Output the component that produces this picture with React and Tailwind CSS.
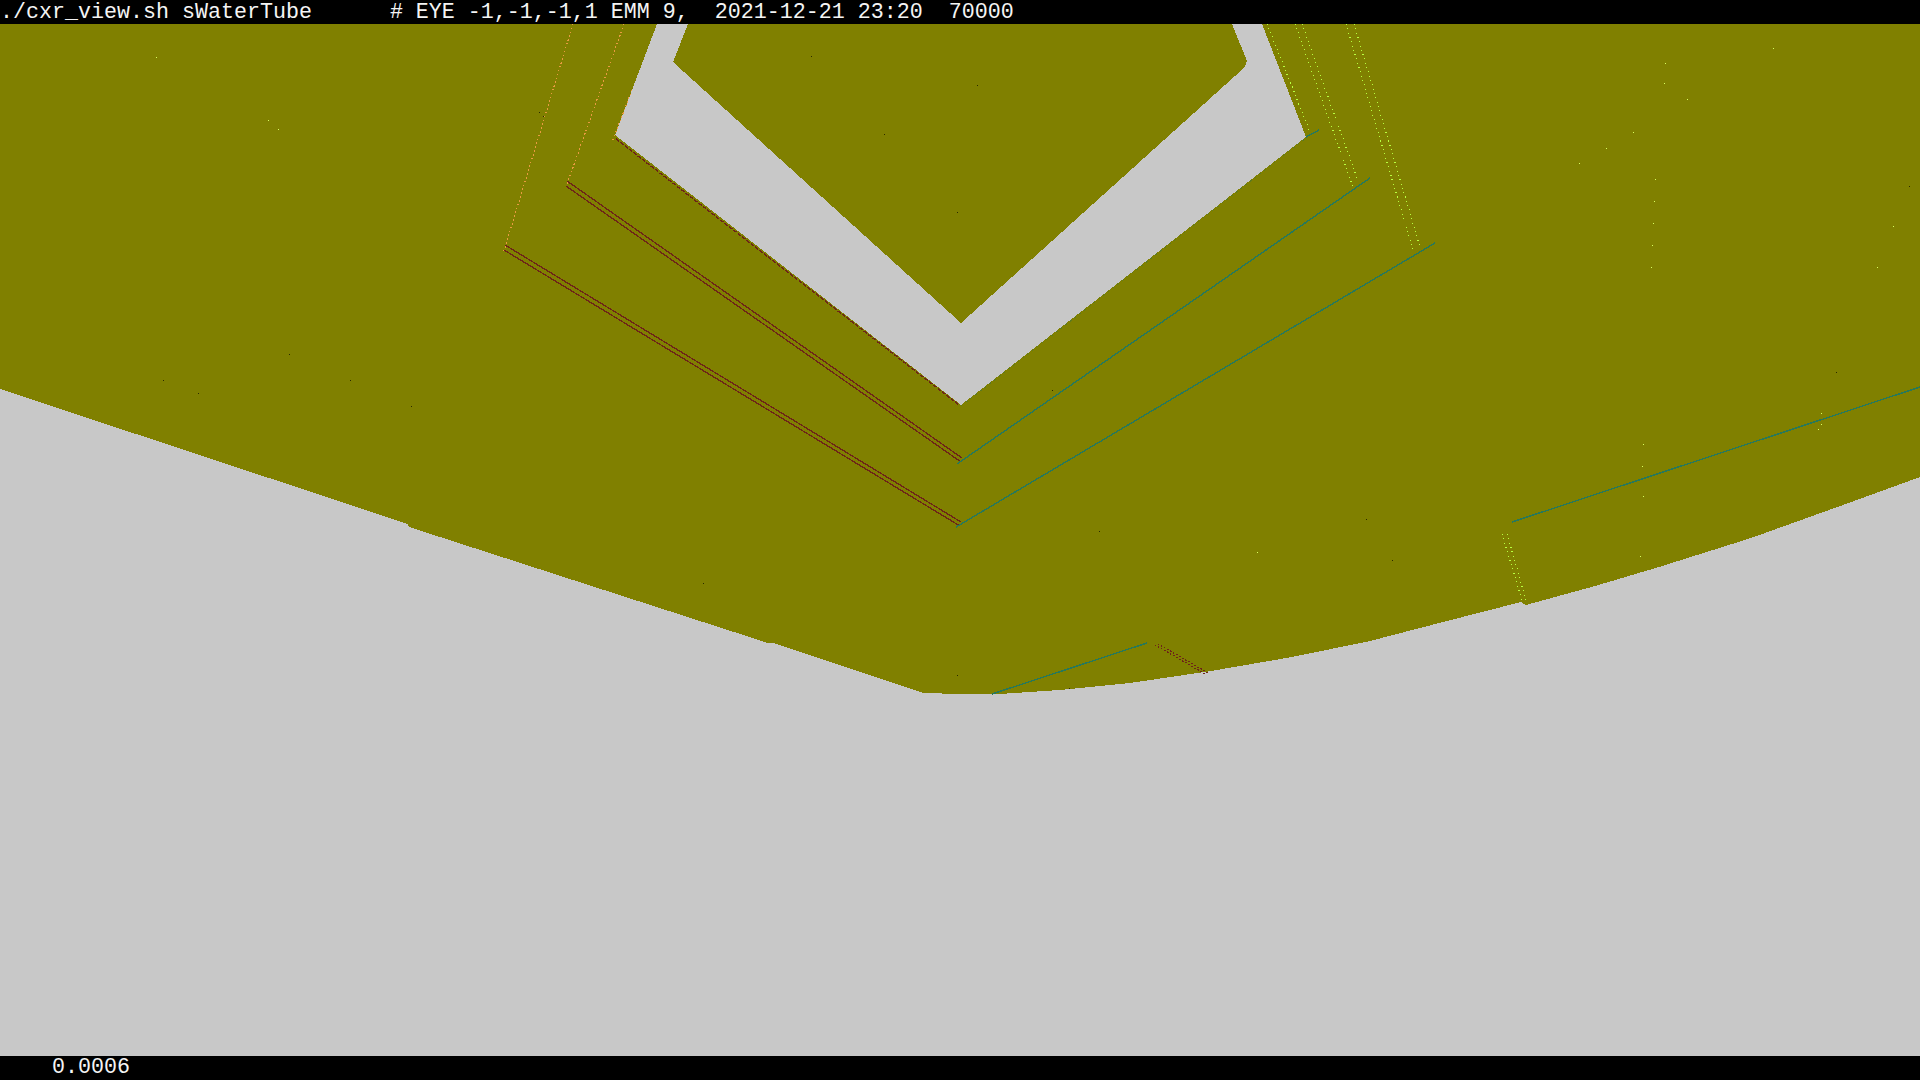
const mono = "font-['Liberation_Mono',monospace]";

const olive = "M0 389 L408 524 L409 527 L768 643 L773 643 L924 693 L960 694 L1000 694 L1060 690 L1130 683 L1211 671 L1292 657 L1370 641 L1443 622 L1521 602 L1526 605 L1595 586 L1659 567 L1751 538 L1843 505 L1920 477 L1920 24 L0 24 Z";
const gray = "M657 24 L615 135 L961 405 L1306 137 L1262 24 L1232 24 L1247 61 L1245 67 L961 323 L673 62 L688 24 Z";
const orange = [[573,24,503,254],[624,24,566,187],[632,90,612,142]];
const maroon = [[505,245,961,522],[504,250,960,526],[567,181,962,458],[566,186,961,462]];
const maroonDotted = [[1158,644,1210,674],[1155,645,1207,675]];
const teal = [[957,464,1370,178],[956,527,1435,243],[1306,137,1319,130],[1512,522,1920,387],[992,694,1147,643]];
const green = [[1267,24,1310,132],[1295,24,1353,187],[1302,24,1357,178],[1346,24,1413,250],[1354,24,1420,247],[1502,534,1522,600],[1507,534,1526,600]];
const darkSpecks = [[811,56],[977,85],[884,134],[957,212],[539,112],[543,116],[1052,390],[1099,531],[957,675],[1069,688],[703,583],[1909,186],[1836,372],[289,354],[163,380],[198,393],[350,380],[411,406],[1366,519],[1392,560]];
const lightSpecks = [[1665,63],[1664,83],[1687,99],[1773,48],[1633,132],[1606,148],[1579,163],[1655,179],[1654,201],[1653,223],[1652,245],[1651,267],[1893,226],[1877,267],[1821,413],[1821,424],[1818,429],[1643,444],[1642,466],[156,57],[268,120],[278,129],[1257,552],[1643,496],[1640,556]];

function Scene() {
  return (
    <svg viewBox="0 24 1920 1032" className="block w-full h-full" shapeRendering="crispEdges">
      <path d={olive} fill="#808000" />
      <path d={gray} fill="#c8c8c8" />
      {orange.map(([a, b, c, d], i) => (
        <line key={i} x1={a} y1={b} x2={c} y2={d} stroke="#e89a40" strokeWidth="1.2" strokeDasharray="1.5 2.5" />
      ))}
      {maroon.map(([a, b, c, d], i) => (
        <line key={i} x1={a} y1={b} x2={c} y2={d} stroke="#6e2418" strokeWidth="1.3" />
      ))}
      {maroonDotted.map(([a, b, c, d], i) => (
        <line key={i} x1={a} y1={b} x2={c} y2={d} stroke="#6e2418" strokeWidth="1.3" strokeDasharray="1.5 2" />
      ))}
      <line x1="616" y1="139" x2="958" y2="404" stroke="#6e2418" strokeWidth="1.4" strokeDasharray="4 1.5" />
      <line x1="961" y1="406" x2="1306" y2="138" stroke="#5c7a20" strokeWidth="1" strokeDasharray="2 4" />
      {teal.map(([a, b, c, d], i) => (
        <line key={i} x1={a} y1={b} x2={c} y2={d} stroke="#28785a" strokeWidth="1.4" />
      ))}
      {green.map(([a, b, c, d], i) => (
        <line key={i} x1={a} y1={b} x2={c} y2={d} stroke="#b8ff40" strokeWidth="1.2" strokeDasharray="1 3.5" />
      ))}
      {darkSpecks.map(([x, y], i) => (
        <rect key={i} x={x} y={y} width="1" height="1" fill="#2a2a00" />
      ))}
      {lightSpecks.map(([x, y], i) => (
        <rect key={i} x={x} y={y} width="1" height="1" fill="#d8ff60" />
      ))}
    </svg>
  );
}

export default function App() {
  return (
    <div className={`flex flex-col w-[1920px] h-[1080px] overflow-hidden bg-[#c8c8c8] text-[21.67px] text-[#f4f4f4] ${mono}`}>
      <div className="h-6 bg-black whitespace-pre leading-[25px]">./cxr_view.sh sWaterTube      # EYE -1,-1,-1,1 EMM 9,  2021-12-21 23:20  70000</div>
      <div className="flex-1 min-h-0">
        <Scene />
      </div>
      <div className="h-6 bg-black whitespace-pre pl-[52px] leading-6">0.0006</div>
    </div>
  );
}
